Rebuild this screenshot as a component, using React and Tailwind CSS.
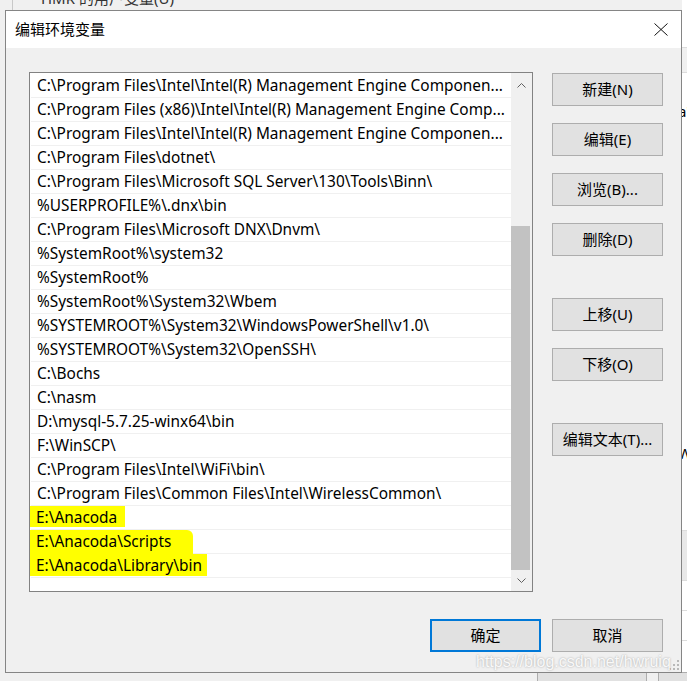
import React from 'react';

const paths = [
    'C:\\Program Files\\Intel\\Intel(R) Management Engine Componen...',
    'C:\\Program Files (x86)\\Intel\\Intel(R) Management Engine Comp...',
    'C:\\Program Files\\Intel\\Intel(R) Management Engine Componen...',
    'C:\\Program Files\\dotnet\\',
    'C:\\Program Files\\Microsoft SQL Server\\130\\Tools\\Binn\\',
    '%USERPROFILE%\\.dnx\\bin',
    'C:\\Program Files\\Microsoft DNX\\Dnvm\\',
    '%SystemRoot%\\system32',
    '%SystemRoot%',
    '%SystemRoot%\\System32\\Wbem',
    '%SYSTEMROOT%\\System32\\WindowsPowerShell\\v1.0\\',
    '%SYSTEMROOT%\\System32\\OpenSSH\\',
    'C:\\Bochs',
    'C:\\nasm',
    'D:\\mysql-5.7.25-winx64\\bin',
    'F:\\WinSCP\\',
    'C:\\Program Files\\Intel\\WiFi\\bin\\',
    'C:\\Program Files\\Common Files\\Intel\\WirelessCommon\\',
];

// highlighter marks drawn over the last three rows
const marked = [
    {text: 'E:\\Anacoda', cls: 'pr-[8px] h-[21px] -mt-[1px]'},
    {text: 'E:\\Anacoda\\Scripts', cls: 'pr-[22px] h-[24px] -mt-[1px] rounded-tr-[6px]'},
    {text: 'E:\\Anacoda\\Library\\bin', cls: 'pr-[5px] h-[22px] -mt-[2px]'},
];

const SideButton = ({label, className = ''}) => (
    <button className={`w-[111px] h-[33px] bg-[#e1e1e1] border border-[#adadad] text-[15px] text-black ${className}`}>
        {label}
    </button>
);

const Chevron = ({down}) => (
    <svg width="9" height="5" viewBox="0 0 9 5" className="block">
        <path d={down ? 'M0.5 0.5 L4.5 4.5 L8.5 0.5' : 'M0.5 4.5 L4.5 0.5 L8.5 4.5'} fill="none" stroke="#606060" strokeWidth="1"/>
    </svg>
);

export default function App() {
    return (
        <div className="relative w-[687px] h-[681px] overflow-hidden bg-[#f0f0f0] text-black"
             style={{fontFamily: '"Noto Sans", "Noto Sans CJK SC", sans-serif'}}>
            {/* window behind the dialog */}
            <div className="absolute left-[12px] top-0 w-[670px] h-[12px] border-l border-[#c8c8c8]">
                <div className="pl-[28px] -mt-[12px] text-[15px] leading-[20px] text-[#333]">HMR 的用户变量(U)</div>
            </div>
            <div className="absolute left-[682px] top-0 w-[10px] h-[681px] bg-white flex flex-col">
                <div className="h-[47px]"></div>
                <div className="h-[26px] bg-[#f0f0f0] border-y border-[#dcdcdc]"></div>
                <div className="h-[28px]"></div>
                <div className="text-[15px] leading-[20px] -ml-[4px]">a'</div>
                <div className="h-[322px]"></div>
                <div className="text-[15px] leading-[20px] -ml-[4px]">W</div>
                <div className="h-[68px] border-b border-[#dcdcdc]"></div>
                <div className="h-[50px] bg-[#e8e8e8] border-b border-[#dcdcdc]"></div>
                <div className="h-[30px] border-b border-[#dcdcdc]"></div>
                <div className="h-[30px] border-b border-[#dcdcdc]"></div>
            </div>
            <div className="absolute left-[537px] top-[672px] w-[110px] h-[20px] bg-[#e1e1e1] border border-[#adadad]"></div>
            <div className="absolute left-[658px] top-[672px] w-[40px] h-[20px] bg-[#e1e1e1] border border-[#adadad]"></div>

            {/* dialog */}
            <div className="absolute left-[5px] top-[10px] w-[677px] h-[663px] border border-[#858585] bg-[#f0f0f0] flex flex-col">
                <div className="h-[37px] bg-white flex items-center justify-between pl-[9px] pr-[13px]">
                    <span className="text-[15px]">编辑环境变量</span>
                    <svg width="14" height="13" viewBox="0 0 14 13">
                        <path d="M0.5 0.5 L13.5 12.5 M13.5 0.5 L0.5 12.5" stroke="#111" strokeWidth="1" fill="none"/>
                    </svg>
                </div>

                <div className="flex pl-[23px] pt-[24px]">
                    <div className="w-[504px] h-[520px] border border-[#828282] bg-white flex">
                        <div className="flex-1 pt-[1px] pl-[1px] overflow-hidden">
                            {paths.map((p, i) => (
                                <div key={i} className="h-[24px] border-b border-[#f0f0f0] pl-[6px] text-[15.4px] leading-[23px] whitespace-nowrap overflow-hidden">
                                    {p}
                                </div>
                            ))}
                            {marked.map((m, i) => (
                                <div key={i} className="h-[24px] border-b border-[#f0f0f0] text-[15.4px] leading-[23px] whitespace-nowrap">
                                    <span className={`inline-block bg-[#ffff00] pl-[6px] -ml-[1px] ${m.cls}`}>
                                        <span className="block leading-[23px]">{m.text}</span>
                                    </span>
                                </div>
                            ))}
                        </div>
                        <div className="w-[21px] bg-[#f0f0f0] flex flex-col">
                            <div className="h-[24px] flex items-center justify-center">
                                <Chevron/>
                            </div>
                            <div className="flex-1 flex flex-col justify-end">
                                <div className="h-[344px] bg-[#c2c2c2] mr-[2px]"></div>
                            </div>
                            <div className="h-[21px] flex items-center justify-center">
                                <Chevron down/>
                            </div>
                        </div>
                    </div>

                    <div className="ml-[19px] pt-[1px] flex flex-col">
                        <SideButton label="新建(N)"/>
                        <SideButton label="编辑(E)" className="mt-[17px]"/>
                        <SideButton label="浏览(B)..." className="mt-[17px]"/>
                        <SideButton label="删除(D)" className="mt-[17px]"/>
                        <SideButton label="上移(U)" className="mt-[42px]"/>
                        <SideButton label="下移(O)" className="mt-[17px]"/>
                        <SideButton label="编辑文本(T)..." className="mt-[42px]"/>
                    </div>
                </div>

                <div className="flex justify-end gap-[11px] pr-[18px] pt-[27px]">
                    <button className="w-[111px] h-[33px] bg-[#e1e1e1] border-2 border-[#0078d7] text-[15px]">确定</button>
                    <SideButton label="取消"/>
                </div>
            </div>

            {/* size grip */}
            <svg className="absolute left-[669px] top-[660px]" width="10" height="10" viewBox="0 0 10 10">
                {[[8, 0], [8, 4], [4, 4], [8, 8], [4, 8], [0, 8]].map(([x, y], i) => (
                    <rect key={i} x={x} y={y} width="2" height="2" fill="#b8b8b8"/>
                ))}
            </svg>
            {/* watermark */}
            <div className="absolute left-[476px] top-[652px] text-[16px] leading-[20px] text-white/90 whitespace-nowrap"
                 style={{fontFamily: '"Liberation Sans", Arial, sans-serif', textShadow: '0 0 2px rgba(0,0,0,0.35)'}}>
                https://blog.csdn.net/hwruiq
            </div>
        </div>
    );
}
